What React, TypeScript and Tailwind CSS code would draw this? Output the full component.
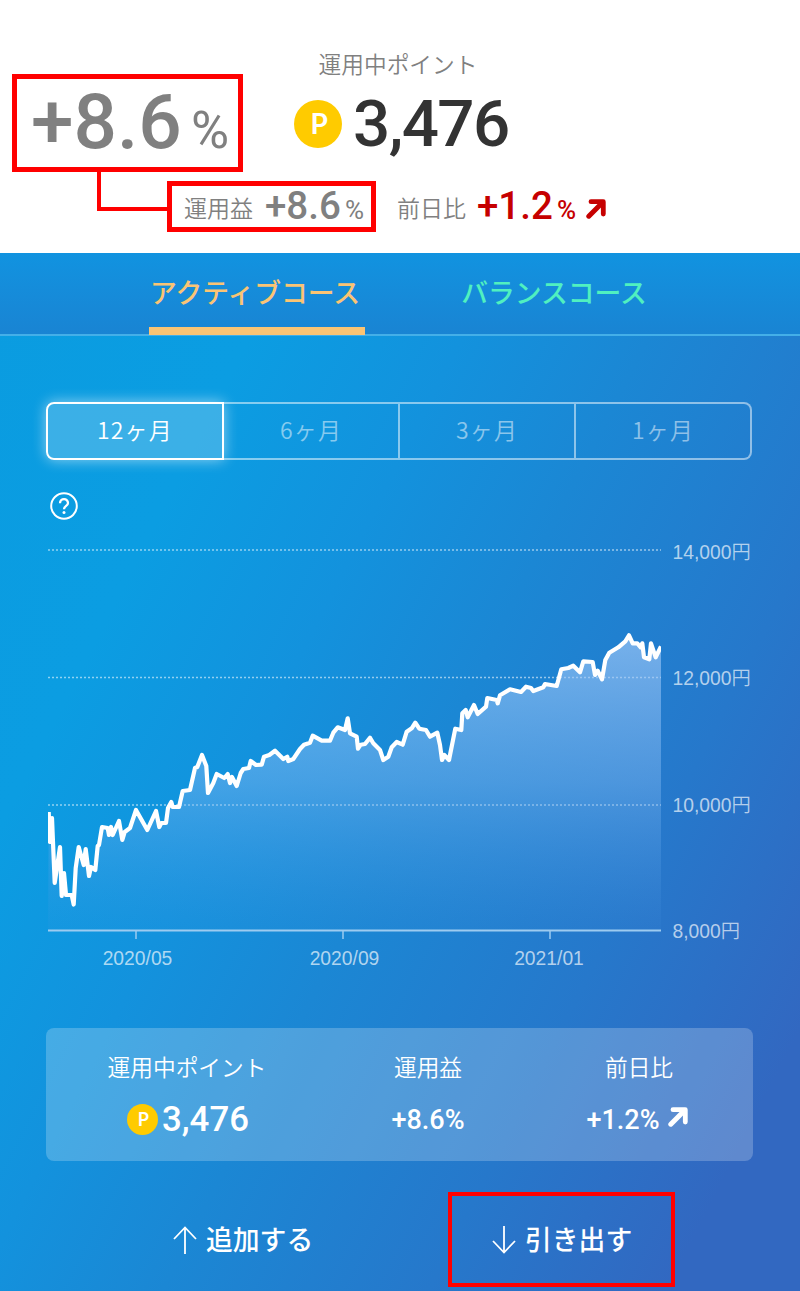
import { clsx } from "clsx";

const JP = "font-['Noto_Sans_CJK_JP',sans-serif]";
const ROBOTO = "font-[Roboto,sans-serif]";

const PERIODS = ["12ヶ月", "6ヶ月", "3ヶ月", "1ヶ月"];

const PRICE_LINE =
  "48.7,812 50,842 52,818 54.7,883 60,847 61.7,896 64,873 66,895 71.7,895 73.7,904.5 75.7,868 78.7,847 83.7,865 85.7,849 89,876 91,867 95.3,870 97.7,846 99,845 102,827 107.7,828 109,835 111,827 112.7,835 119,821 122.3,840 124.7,832 130,828 136,810 147.3,830 156,811 159.3,827 161.3,823 166,823 168,808 171.3,802 172.7,807 179,807 182.7,791 190,790 195,768 197.3,767 202,755 206.3,766 208,793 213.3,783 216.7,774 224.3,778 227.7,774 230,783 232,777 236.7,786 " +
  "240.7,773 243.3,769 249,768 250.7,761 256,765 261.7,764.7 264,756.7 269.3,755 275,750.7 283.3,759 287.3,756.7 288.3,761 293.3,759 300,749 304,744.7 310,742.7 312.7,735.7 321.7,740.7 330,740.7 333.3,732.7 337.7,727.3 345,730 347.7,718.3 350,733.3 356.7,736.7 358,748.7 360.7,744.7 365,744 370,737.7 373.3,743.3 380,750 383.3,760 388.3,756.7 391.7,747.3 396.7,742 402.7,744.7 406.7,731.7 411.7,728.3 415.3,722.7 419.3,728.7 426,730 430,736.7 437.3,732.7 440,745 442,760 444.3,755 449,760 " +
  "455.3,728.7 461.3,730 462.3,713.3 465.7,710 467.7,717.3 474,705 477.7,714 486,706.7 487.3,698 496.7,700 497.7,703.3 500,695.3 510,689.3 521,692 526,686.7 531,688 533.3,691 543.3,687.3 545,684 556.7,686 561.3,669.3 568.3,668 573.3,665.7 580,672.3 583.3,661.3 592.7,662 595,675 597.7,670.7 602,679.3 605.3,660 609.3,652.7 618.3,647.3 625.3,641.3 629,635.3 632.7,643.3 637.3,643.3 640.7,647.3 642.3,643.3 644,657.3 649.3,659.3 651,643.3 655.7,657.3 661,646.5";

const Y_LABELS = [
  { y: 558.5, text: "14,000円" },
  { y: 684.5, text: "12,000円" },
  { y: 811.5, text: "10,000円" },
  { y: 937.5, text: "8,000円" },
];

const X_LABELS = [
  { x: 137.5, tick: 136, text: "2020/05" },
  { x: 344.5, tick: 343, text: "2020/09" },
  { x: 549, tick: 550, text: "2021/01" },
];

function PointIcon({ className }: { className?: string }) {
  return (
    <svg viewBox="0 0 48 48" className={className} aria-hidden="true">
      <circle cx="24" cy="24" r="24" fill="#ffcb00" />
      <text
        x="25.2"
        y="34"
        textAnchor="middle"
        fill="#fff"
        fontFamily="Lato, sans-serif"
        fontWeight="700"
        fontSize="28"
      >
        P
      </text>
    </svg>
  );
}

function ArrowUpRight({ className }: { className?: string }) {
  return (
    <svg viewBox="0 0 20 20" className={className} fill="none" stroke="currentColor" aria-hidden="true">
      <path d="M5 2.7 H17.3 V15" strokeWidth="4.8" strokeLinecap="round" strokeLinejoin="round" />
      <path d="M16 4 L2.8 17.2" strokeWidth="5" strokeLinecap="round" />
    </svg>
  );
}

function ThinArrow({ down }: { down?: boolean }) {
  return (
    <svg viewBox="0 0 24 28" className={clsx("h-7 w-6", down && "rotate-180")} fill="none" aria-hidden="true">
      <path d="M12 28 V1.5 M1 13 L12 1.5 L23 13" stroke="#fff" strokeWidth="1.8" />
    </svg>
  );
}

function Header() {
  return (
    <header className="flex h-[253px] flex-col bg-white pt-[48px]">
      <p className={clsx(JP, "pr-1 text-center text-[22.7px] leading-8 font-[350] text-[#808080]")}>
        運用中ポイント
      </p>
      <div className="mt-[8px] flex h-[72px] items-center pl-[294px]">
        <PointIcon className="h-12 w-12" />
        <span className={clsx(ROBOTO, "ml-[11px] text-[65.5px] leading-[72px] font-medium tracking-[-1.6px] text-[#333]")}>
          3,476
        </span>
      </div>
      <div className="mt-[17px] flex h-12 items-baseline pl-[184px]">
        <span className={clsx(JP, "w-[81px] text-[23px] leading-11 font-[350] text-[#808080]")}>
          <span className="inline-block -translate-y-0.5">運用益</span>
        </span>
        <span className={clsx(ROBOTO, "w-[80px] text-[38.5px] leading-12 font-medium text-[#808080]")}>
          +8.6
        </span>
        <span className={clsx(ROBOTO, "w-[52px] text-[26px] text-[#808080]")}>%</span>
        <span className={clsx(JP, "w-[80px] text-[23px] leading-11 font-[350] text-[#808080]")}>
          <span className="inline-block -translate-y-0.5">前日比</span>
        </span>
        <span className={clsx(ROBOTO, "w-[80px] text-[38.5px] font-medium text-[#c60000]")}>+1.2</span>
        <span className={clsx(ROBOTO, "w-[29px] text-[26px] font-medium text-[#c60000]")}>%</span>
        <ArrowUpRight className="h-5 w-5 text-[#c60000]" />
      </div>
    </header>
  );
}

function CourseTabs() {
  return (
    <nav
      className={clsx(
        JP,
        "flex h-[83px] border-b-2 border-[#44afe8] bg-linear-to-b from-[#1193e0] to-[#1984d3] pl-[149px] text-[26.8px] font-medium",
      )}
    >
      <button
        type="button"
        className="h-[82px] w-[216px] border-b-8 border-[#fac474] pt-[4px] pr-[4px] whitespace-nowrap text-[#fac474]"
      >
        アクティブコース
      </button>
      <button
        type="button"
        className="ml-[81px] h-[82px] w-[216px] border-b-8 border-transparent pt-[4px] whitespace-nowrap text-[#50f0c0]"
      >
        バランスコース
      </button>
    </nav>
  );
}

function PeriodSwitch() {
  return (
    <div className="mt-[66px] ml-[46px] flex h-[58px] w-[706px] rounded-lg">
      {PERIODS.map((label, i) => (
        <button
          key={label}
          type="button"
          className={clsx(
            JP,
            "flex-1 border-2 pb-[4px] text-[23px] font-[350] tracking-[1.2px]",
            i === 0
              ? "w-[178px] flex-none rounded-l-lg border-white bg-white/20 text-white shadow-[0_0_14px_rgba(255,255,255,0.55)]"
              : "border-l-0 border-white/50 text-white/50",
            i === 3 && "rounded-r-lg",
          )}
        >
          {label}
        </button>
      ))}
    </div>
  );
}

function PriceChart() {
  return (
    <svg viewBox="0 540 800 440" className="mt-[20px] block h-[440px] w-[800px]">
      <defs>
        <linearGradient id="area" gradientUnits="userSpaceOnUse" x1="0" y1="635" x2="0" y2="930">
          <stop offset="0" stopColor="#a8cdfa" stopOpacity="0.64" />
          <stop offset="0.5" stopColor="#7db5f0" stopOpacity="0.46" />
          <stop offset="1" stopColor="#4b98e4" stopOpacity="0.08" />
        </linearGradient>
        <clipPath id="plot">
          <rect x="48" y="600" width="613" height="332" />
        </clipPath>
      </defs>
      <g stroke="#fff" strokeOpacity="0.55" strokeWidth="1.4" strokeDasharray="2 2">
        <path d="M48 550 H661" />
        <path d="M48 677.5 H661" />
        <path d="M48 805 H661" />
      </g>
      <g clipPath="url(#plot)">
        <polygon points={`48,930 ${PRICE_LINE} 661,930`} fill="url(#area)" />
        <polyline points={PRICE_LINE} fill="none" stroke="#fff" strokeWidth="4.2" strokeLinejoin="round" />
      </g>
      <path d="M48 930.5 H661" stroke="#9dcbf0" strokeWidth="2" />
      <g fontSize="19.3" fill="#fff" fillOpacity="0.66" fontFamily="Liberation Sans, Noto Sans CJK JP, sans-serif">
        {Y_LABELS.map(({ y, text }) => (
          <text key={text} x="672.5" y={y} fontWeight="350">
            {text}
          </text>
        ))}
        {X_LABELS.map(({ x, tick, text }) => (
          <g key={text}>
            <path d={`M${tick} 931 V939`} stroke="#9dcbf0" strokeWidth="1.5" />
            <text x={x} y="964.5" textAnchor="middle">
              {text}
            </text>
          </g>
        ))}
      </g>
    </svg>
  );
}

function SummaryCard() {
  const label = clsx(JP, "text-[22.7px] leading-8 font-[350]");
  const value = clsx(ROBOTO, "flex h-12 items-center text-[27px] font-medium");
  return (
    <section className="mt-[48px] ml-[46px] flex h-[133px] w-[707px] rounded-lg bg-white/22 pt-[23px] text-white">
      <div className="flex w-[282px] flex-col items-center gap-[12px]">
        <span className={label}>運用中ポイント</span>
        <div className={clsx(value, "ml-[3px]")}>
          <PointIcon className="mr-[4px] h-[31px] w-[31px]" />
          <span className="pr-px text-[34.8px]">3,476</span>
        </div>
      </div>
      <div className="flex w-[200px] flex-col items-center gap-[13px]">
        <span className={label}>運用益</span>
        <div className={value}>+8.6%</div>
      </div>
      <div className="flex w-[222px] flex-col items-center gap-[13px]">
        <span className={label}>前日比</span>
        <div className={clsx(value, "-ml-[4px]")}>
          +1.2%
          <ArrowUpRight className="mb-[6px] ml-2 h-5 w-5" />
        </div>
      </div>
    </section>
  );
}

function Actions() {
  const button = clsx(JP, "flex h-[95px] items-center gap-[9px] text-[26.8px] font-medium text-white");
  return (
    <div className="mt-[31px] flex">
      <button type="button" className={clsx(button, "ml-[173px] w-[275px]")}>
        <ThinArrow />
        追加する
      </button>
      <button type="button" className={clsx(button, "w-[227px] border-4 border-[#ff0000] pl-[40px]")}>
        <ThinArrow down />
        引き出す
      </button>
    </div>
  );
}

// Enlarged callout of the profit rate, joined to the small one by a connector
function ProfitCallout() {
  return (
    <>
      <div
        className={clsx(
          ROBOTO,
          "absolute top-[74px] left-[12px] flex h-[98px] w-[231px] items-baseline border-[5px] border-[#ff0000] pl-[14px] text-[#808080]",
        )}
      >
        <span className="w-[160px] text-[76.5px] leading-[87px] font-medium">+8.6</span>
        <span className="text-[52px] leading-[87px]">%</span>
      </div>
      <div className="absolute top-[172px] left-[97px] h-[39px] w-[71px] border-b-4 border-l-4 border-[#ff0000]" />
      <div className="absolute top-[181px] left-[167px] h-[51px] w-[209px] border-[5px] border-[#ff0000]" />
    </>
  );
}

export default function App() {
  return (
    <main className="relative h-[1291px] w-[800px] overflow-hidden">
      <Header />
      <div className="h-[1038px] bg-[linear-gradient(117deg,#0a9ce0_0%,#0b9de2_22%,#1392dd_38%,#1b87d4_52%,#2678cb_72%,#3268c1_90%,#3268c1_100%)]">
        <CourseTabs />
        <PeriodSwitch />
        <div className="mt-[32px] ml-[50px] flex h-[28px] w-[28px] items-center justify-center">
          <svg viewBox="0 0 28 28" className="h-7 w-7" fill="none" stroke="#fff" aria-hidden="true">
            <circle cx="14" cy="14" r="12.8" strokeWidth="2" />
            <path d="M10 11.2 C10 5.8 18 5.8 18 11 C18 14 14 13.8 14 17.2" strokeWidth="2.3" />
            <circle cx="14" cy="20.4" r="1.5" fill="#fff" stroke="none" />
          </svg>
        </div>
        <PriceChart />
        <SummaryCard />
        <Actions />
      </div>
      <ProfitCallout />
    </main>
  );
}
